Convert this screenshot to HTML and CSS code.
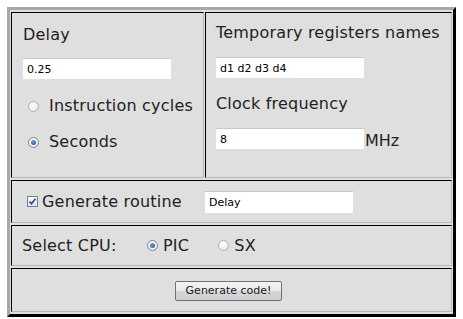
FILE: index.html
```html
<!DOCTYPE html>
<html>
<head>
<meta charset="utf-8">
<link rel="stylesheet" href="styles.css">
</head>
<body>
<table class="form">
  <colgroup><col class="col-left"><col class="col-right"></colgroup>
  <tr>
    <td class="cell cell-left">
      <div class="label first">Delay</div>
      <input class="field" type="text" value="0.25">
      <label class="opt opt-1"><span class="radio"></span>Instruction cycles</label>
      <label class="opt opt-2"><span class="radio on"></span>Seconds</label>
    </td>
    <td class="cell cell-right">
      <div class="label first-r">Temporary registers names</div>
      <input class="field" type="text" value="d1 d2 d3 d4">
      <div class="label second">Clock frequency</div>
      <div class="freq"><input class="field" type="text" value="8"><span class="unit">MHz</span></div>
    </td>
  </tr>
  <tr>
    <td class="cell row-gen" colspan="2">
      <label class="gen"><span class="check"><svg width="9" height="9" viewBox="0 0 9 9"><path d="M1.5 4.5 L3.5 6.8 L7.5 1.8" fill="none" stroke="#2a3f8f" stroke-width="1.6"/></svg></span>Generate routine</label>
      <input class="field field-gen" type="text" value="Delay">
    </td>
  </tr>
  <tr>
    <td class="cell row-cpu" colspan="2">
      <span class="cpu-label">Select CPU:</span>
      <label class="cpu cpu-pic"><span class="radio on"></span>PIC</label>
      <label class="cpu"><span class="radio"></span>SX</label>
    </td>
  </tr>
  <tr>
    <td class="cell row-btn" colspan="2">
      <button class="btn" type="button">Generate code!</button>
    </td>
  </tr>
</table>
</body>
</html>
```
FILE: styles.css
```css
html, body {
  margin: 0;
  padding: 0;
  background: #ffffff;
}
body {
  padding: 7px 0 0 7px;
  font-family: "DejaVu Sans", Verdana, sans-serif;
  color: #222222;
}
.form {
  width: 449px;
  height: 310px;
  table-layout: fixed;
  border-collapse: separate;
  border-spacing: 1px 2px;
  border-style: solid;
  border-width: 3px;
  border-color: #a8a8a8 #000000 #000000 #a8a8a8;
  background: #dfdfdf;
  box-sizing: border-box;
}
.col-left { width: 193px; }
.cell {
  border-style: solid;
  border-width: 1px;
  border-color: #000000 #b8b8b8 #b8b8b8 #000000;
  background: #dfdfdf;
  padding: 0;
  vertical-align: top;
}
.cell-left {
  height: 164px;
  padding: 0 0 0 11px;
}
.cell-right {
  padding: 0 0 0 10px;
}
.label {
  font-size: 16px;
  line-height: 18px;
  letter-spacing: 0.2px;
  white-space: nowrap;
}
.first { padding-top: 13px; margin-bottom: 14px; }
.first-r { padding-top: 11px; margin-bottom: 15px; }
.second { margin-top: 17px; margin-bottom: 15px; }
.field {
  display: block;
  box-sizing: border-box;
  width: 148px;
  height: 21px;
  margin: 0;
  padding: 1px 4px 0;
  border: none;
  border-top: 1px solid #c8c8c8;
  background: #ffffff;
  font-family: "DejaVu Sans", Tahoma, sans-serif;
  font-size: 11px;
  color: #000000;
  outline: none;
}
.opt {
  display: flex;
  align-items: center;
  font-size: 16px;
  line-height: 18px;
  letter-spacing: 0.2px;
  padding-left: 5px;
  white-space: nowrap;
}
.opt-1 { margin-top: 18px; }
.opt-2 { margin-top: 18px; }
.radio {
  display: inline-block;
  box-sizing: border-box;
  width: 11px;
  height: 11px;
  border-radius: 50%;
  border: 1px solid #b0b0b0;
  background: radial-gradient(circle at 40% 35%, #ffffff, #e4e4e4);
  margin-right: 10px;
  position: relative;
  flex: none;
}
.radio.on {
  border-color: #7a8590;
}
.radio.on::after {
  content: "";
  position: absolute;
  left: 2px;
  top: 2px;
  width: 5px;
  height: 5px;
  border-radius: 50%;
  background: radial-gradient(circle at 40% 35%, #6aa0d8, #1d4f8a);
}
.freq {
  display: flex;
  align-items: flex-end;
}
.unit {
  font-size: 16px;
  line-height: 17px;
  margin-left: 1px;
}
.row-gen {
  height: 41px;
  padding: 0 0 0 15px;
  vertical-align: middle;
}
.row-gen .gen, .row-gen .field-gen {
  display: inline-flex;
  vertical-align: middle;
}
.gen {
  align-items: center;
  font-size: 16px;
  line-height: 18px;
  letter-spacing: 0.2px;
}
.check {
  display: inline-flex;
  align-items: center;
  justify-content: center;
  box-sizing: border-box;
  width: 11px;
  height: 11px;
  border: 1px solid #6f7f96;
  background: linear-gradient(#ffffff, #dfe3ea);
  margin-right: 4px;
}
.field-gen {
  margin-left: 18px;
  height: 22px;
}
.row-cpu {
  height: 39px;
  padding: 0 0 0 10px;
  vertical-align: middle;
  font-size: 16px;
  letter-spacing: 0.2px;
}
.cpu-label {
  margin-right: 25px;
}
.cpu {
  display: inline-flex;
  align-items: center;
}
.cpu .radio {
  margin-right: 5px;
}
.cpu-pic {
  margin-right: 24px;
}
.row-btn {
  text-align: center;
  vertical-align: middle;
  padding: 0 6px 0 0;
}
.btn {
  box-sizing: border-box;
  width: 107px;
  height: 20px;
  padding: 0;
  border: 1px solid #707070;
  border-radius: 2px;
  background: linear-gradient(#f4f4f4 0%, #e8e8e8 50%, #d6d6d6 51%, #cfcfcf 100%);
  font-family: "DejaVu Sans", Tahoma, sans-serif;
  font-size: 11px;
  color: #1a1a1a;
}
```
